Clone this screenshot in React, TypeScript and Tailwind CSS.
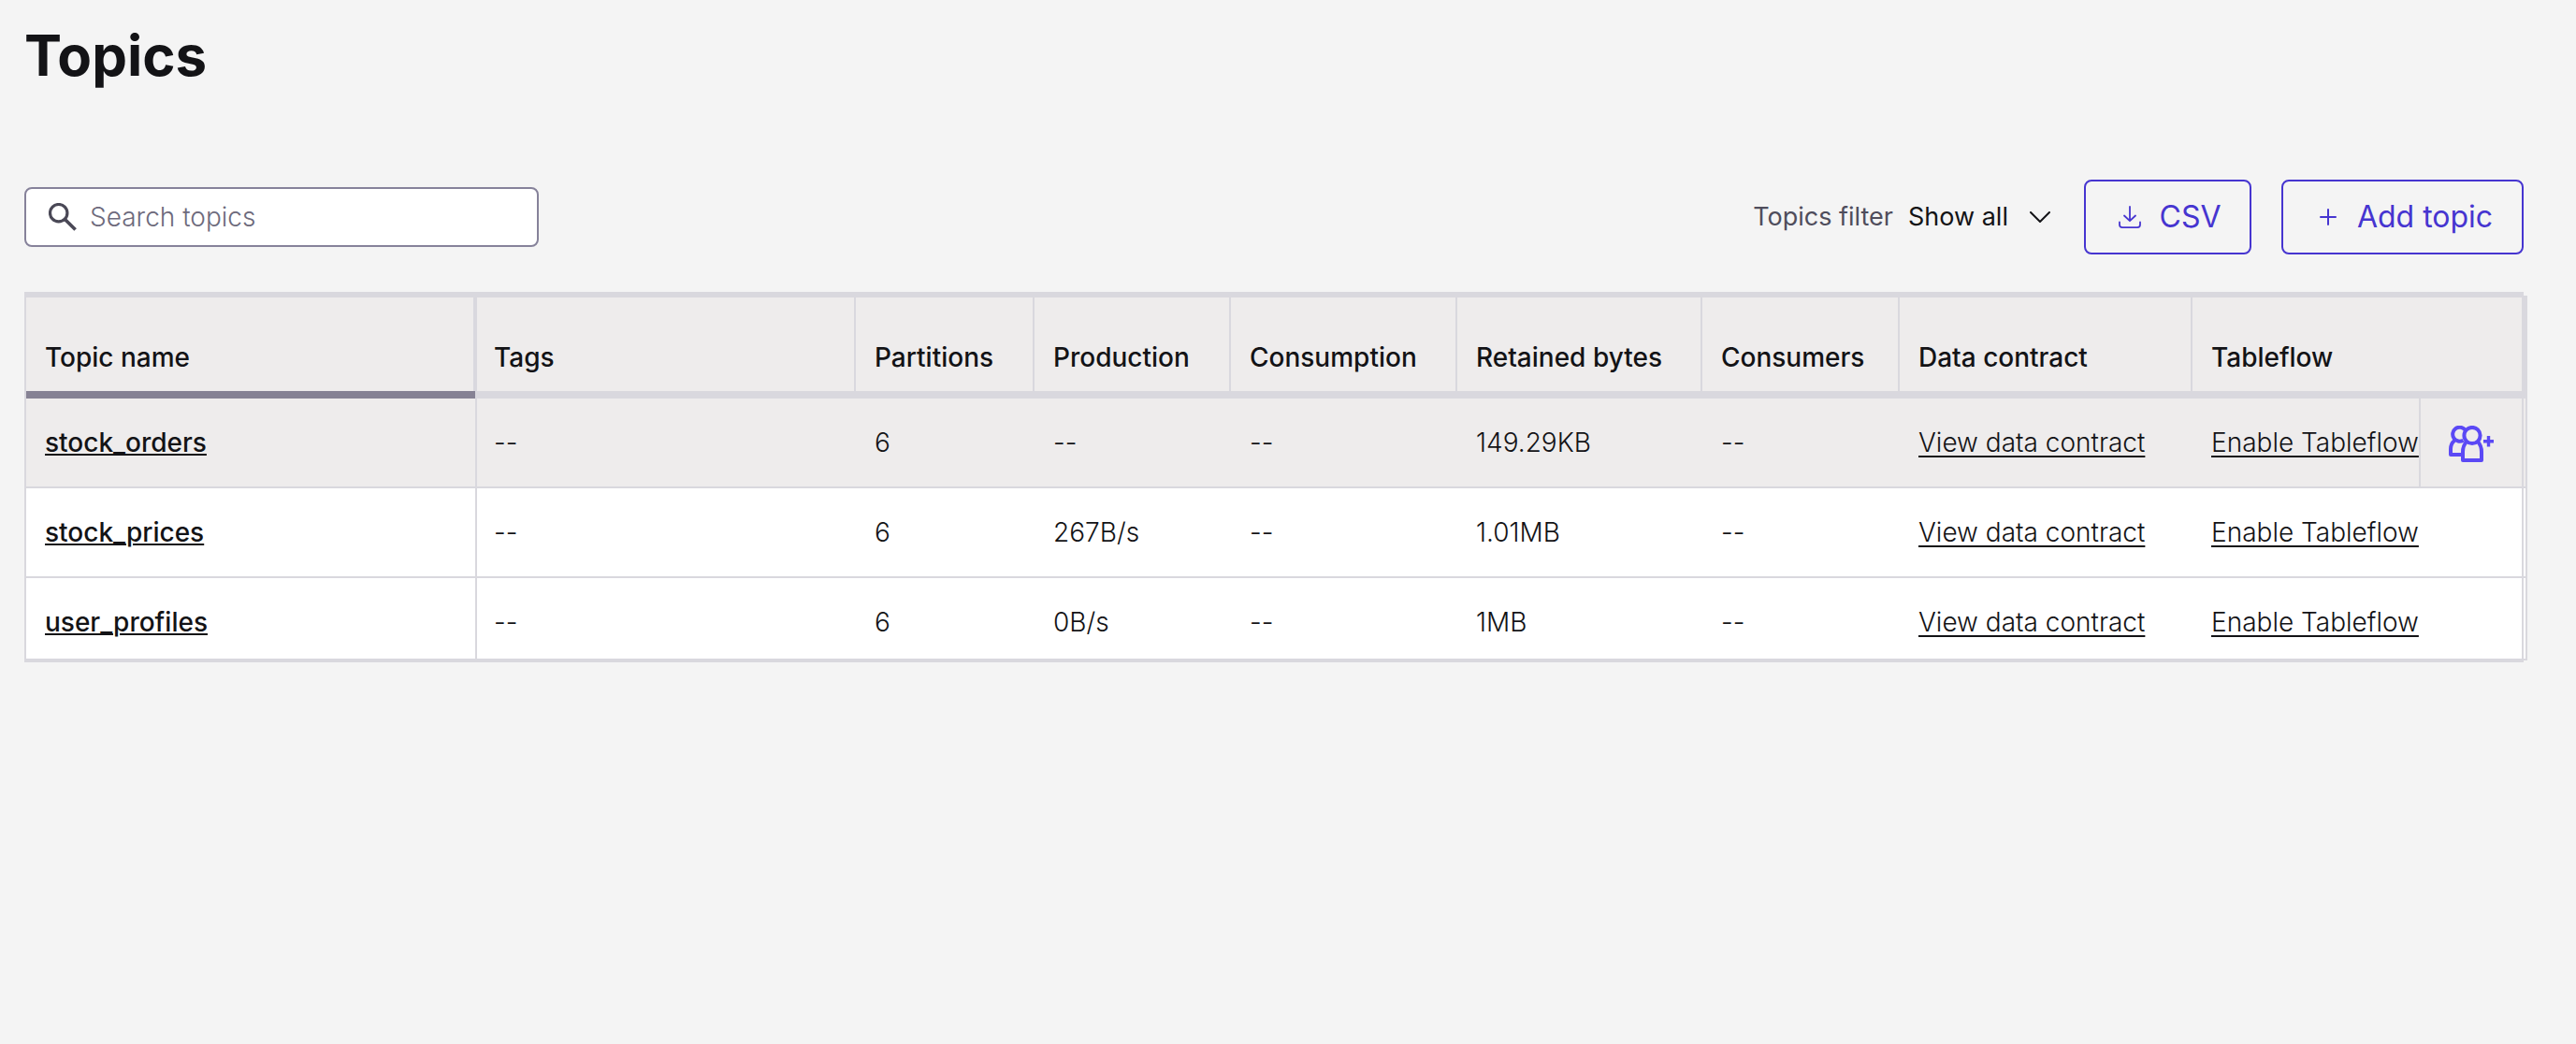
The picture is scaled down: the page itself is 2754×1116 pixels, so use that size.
import React from "react";

type Topic = {
  name: string;
  production: string;
  retained: string;
  active?: boolean;
};

const topics: Topic[] = [
  { name: "stock_orders", production: "--", retained: "149.29KB", active: true },
  { name: "stock_prices", production: "267B/s", retained: "1.01MB" },
  { name: "user_profiles", production: "0B/s", retained: "1MB" },
];

const metricColumns: string[] = [
  "Partitions",
  "Production",
  "Consumption",
  "Retained bytes",
  "Consumers",
  "Data contract",
];

function SearchIcon() {
  return (
    <svg className="size-[30px] shrink-0" viewBox="0 0 30 30" fill="none" stroke="#4a4856" strokeWidth="3.2" aria-hidden="true">
      <circle cx="10.700" cy="10.700" r="9.200" />
      <path d="M17.200 17.200 L28.600 28.600" strokeWidth="3.600" />
    </svg>
  );
}

function DownloadIcon() {
  return (
    <svg className="size-6 shrink-0" viewBox="0 0 24 24" fill="none" stroke="currentColor" strokeWidth="1.800" strokeLinecap="round" strokeLinejoin="round" aria-hidden="true">
      <path d="M12 0.900 V16 M6 10.500 L12 16.200 L18 10.500" />
      <path d="M1 17.500 V20 Q1 23.100 4 23.100 H20 Q23 23.100 23 20 V17.500" />
    </svg>
  );
}

function PlusIcon() {
  return (
    <svg className="size-[18px] shrink-0" viewBox="0 0 18 18" stroke="currentColor" strokeWidth="2" strokeLinecap="round" aria-hidden="true">
      <path d="M9 1 V17 M1 9 H17" />
    </svg>
  );
}

function AddPeopleIcon() {
  return (
    <svg className="h-10 w-12" viewBox="0 0 48 40" fill="none" stroke="#5b49f5" strokeWidth="4" strokeLinejoin="round" aria-hidden="true">
      <path d="M17.500 4.500 A7.500 7.500 0 1 0 15.500 15.700" />
      <path d="M6 16 Q2 19.500 2 25 V31 H14" />
      <circle cx="25" cy="10.500" r="8.600" />
      <path d="M19 17 Q15 21.500 15 28 V37 H35 V28 Q35 21.500 31 17" />
      <path d="M42.500 11 V22.400 M37 16.700 H48" strokeWidth="3.400" />
    </svg>
  );
}

function TopicRow({ topic, last }: { topic: Topic; last: boolean }) {
  const cell = last
    ? "border-b-2 border-[#d9d8de] px-5 pt-2"
    : "border-b-2 border-[#d9d8de] px-5";
  return (
    <tr className={`${last ? "h-[88px]" : "h-24"} ${topic.active ? "bg-[#eeecec]" : "bg-white"}`}>
      <td className={cell}>
        <a href="#topic" className="font-medium underline decoration-2 underline-offset-2">
          {topic.name}
        </a>
      </td>
      <td className={`${cell} border-l-2 pl-[18px]`}>--</td>
      <td className={cell}>6</td>
      <td className={cell}>{topic.production}</td>
      <td className={cell}>--</td>
      <td className={cell}>{topic.retained}</td>
      <td className={cell}>--</td>
      <td className={cell}>
        <a href="#contract" className="underline decoration-2 underline-offset-4">
          View data contract
        </a>
      </td>
      <td className={`${cell} pr-0 whitespace-nowrap`}>
        <a href="#tableflow" className="underline decoration-2 underline-offset-4">
          Enable Tableflow
        </a>
      </td>
      <td className={`border-r-2 border-b-2 border-[#d9d8de] ${topic.active ? "border-l-2" : ""}`}>
        {topic.active && (
          <button type="button" aria-label="Add consumer" className="flex w-full items-center justify-center pt-1">
            <AddPeopleIcon />
          </button>
        )}
      </td>
      <td className="border-r-2 border-b-2 border-[#d9d8de] p-0" />
    </tr>
  );
}

export default function App() {
  return (
    <main className="min-h-screen bg-[#f4f4f4] px-[26px] pt-5 font-['Inter',sans-serif] text-[#131316]">
      <h1 className="text-[60px] leading-[78px] font-bold">Topics</h1>

      <div className="mt-[94px] mr-[30px] flex items-center justify-between">
        <label className="flex h-16 w-[550px] items-center gap-3.5 rounded-lg border-2 border-[#86829a] bg-white px-6">
          <SearchIcon />
          <input
            type="search"
            aria-label="Search topics"
            placeholder="Search topics"
            className="min-w-0 flex-1 bg-transparent text-[28px] font-light outline-none placeholder:text-[#6d6a7c]"
          />
        </label>

        <div className="flex items-center">
          <label htmlFor="topics-filter" className="mr-4 text-[27px] text-[#4f4d5c]">
            Topics filter
          </label>
          <div className="relative mr-9 flex items-center">
            <select id="topics-filter" className="w-[152px] appearance-none bg-transparent text-[27px]">
              <option>Show all</option>
            </select>
            <svg className="pointer-events-none absolute right-0 h-3 w-[22px]" viewBox="0 0 22 12" fill="none" stroke="#131316" strokeWidth="2" strokeLinecap="round" aria-hidden="true">
              <path d="M1 1 L11 11 L21 1" />
            </svg>
          </div>
          <button type="button" className="mr-8 flex h-20 w-[179px] items-center justify-center gap-5 rounded-lg border-2 border-[#4635d0] pl-1 text-[32px] text-[#4635d0]">
            <DownloadIcon />
            CSV
          </button>
          <button type="button" className="flex h-20 w-[259px] items-center justify-center gap-[22px] rounded-lg border-2 border-[#4635d0] pl-2 text-[32px] text-[#4635d0]">
            <PlusIcon />
            Add topic
          </button>
        </div>
      </div>

      <div className="mt-10 mr-[30px] border-x-2 border-t-4 border-b-2 border-[#d9d8de]">
        <div className="-mr-1.5">
          <table className="w-full table-fixed border-separate border-spacing-0 text-left text-[28px] leading-9 font-light">
            <colgroup>
              <col className="w-[480px]" />
              <col />
              <col className="w-[191px]" />
              <col className="w-[210px]" />
              <col className="w-[242px]" />
              <col className="w-[262px]" />
              <col className="w-[211px]" />
              <col className="w-[313px]" />
              <col className="w-[242px]" />
              <col className="w-[112px]" />
              <col className="w-1" />
            </colgroup>
            <thead>
              <tr className="h-[110px] bg-[#eeecec]">
                <th scope="col" className="relative border-t-2 border-r-2 border-b-8 border-[#d9d8de] px-5 pt-7 font-medium">
                  Topic name
                  <span className="absolute right-[-2px] -bottom-2 left-0 h-2 bg-[#868294]" />
                </th>
                <th scope="col" className="border-x-2 border-t-2 border-b-8 border-[#d9d8de] pt-7 pl-[18px] font-medium">
                  Tags
                </th>
                {metricColumns.map((label) => (
                  <th key={label} scope="col" className="border-t-2 border-r-2 border-b-8 border-[#d9d8de] pt-7 pl-5 font-medium">
                    {label}
                  </th>
                ))}
                <th scope="col" colSpan={3} className="border-t-2 border-r-6 border-b-8 border-[#d9d8de] pt-7 pl-5 font-medium">
                  Tableflow
                </th>
              </tr>
            </thead>
            <tbody>
              {topics.map((topic, i) => (
                <TopicRow key={topic.name} topic={topic} last={i === topics.length - 1} />
              ))}
            </tbody>
          </table>
        </div>
      </div>
    </main>
  );
}
